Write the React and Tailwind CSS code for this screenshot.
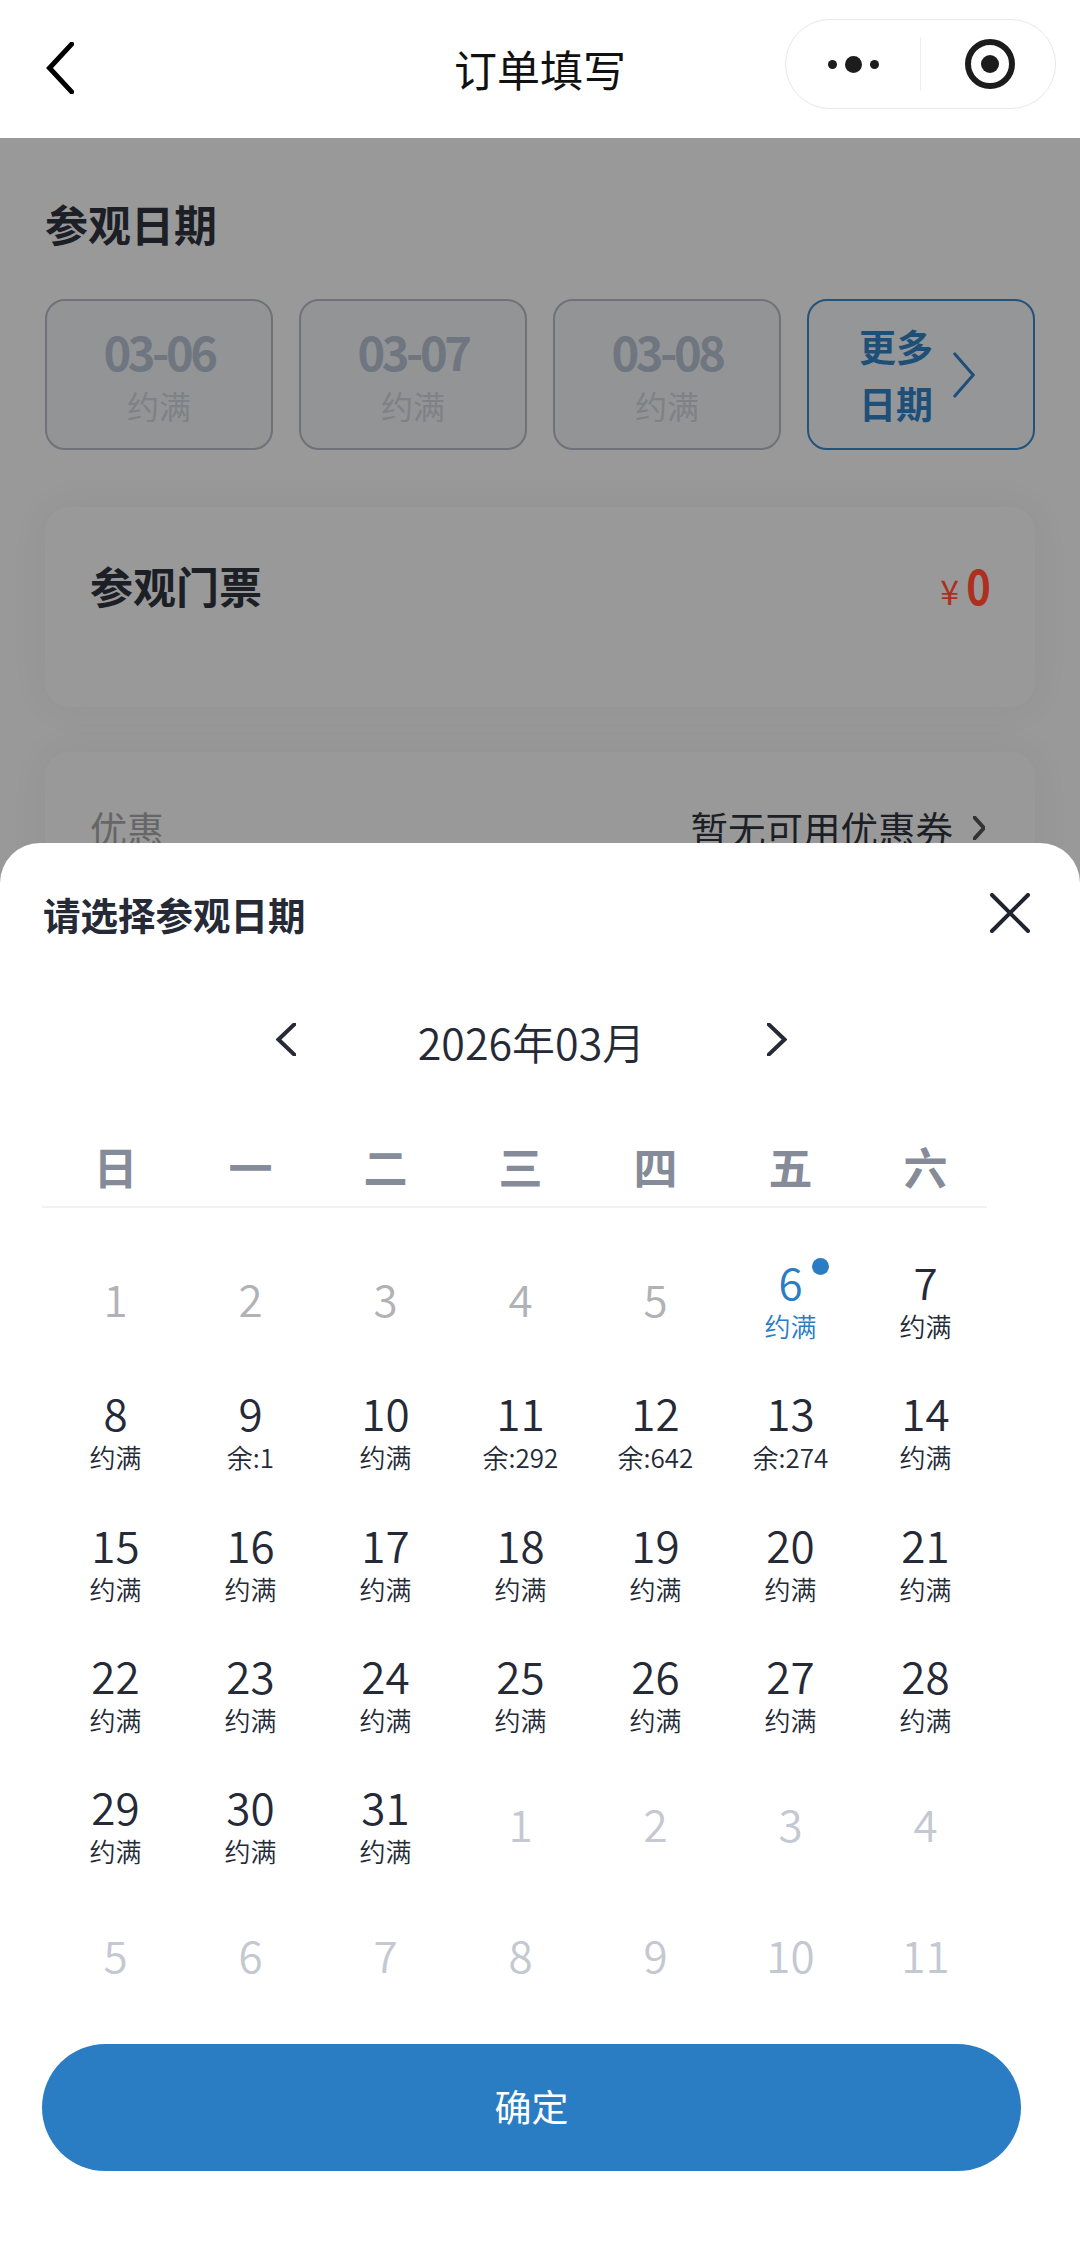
import React from 'react';

const weekdays = ['日', '一', '二', '三', '四', '五', '六'];

const full = '约满';

const days = [
  { n: 1, muted: true }, { n: 2, muted: true }, { n: 3, muted: true }, { n: 4, muted: true }, { n: 5, muted: true },
  { n: 6, sub: full, selected: true }, { n: 7, sub: full },
  { n: 8, sub: full }, { n: 9, sub: '余:1' }, { n: 10, sub: full }, { n: 11, sub: '余:292' }, { n: 12, sub: '余:642' }, { n: 13, sub: '余:274' }, { n: 14, sub: full },
  { n: 15, sub: full }, { n: 16, sub: full }, { n: 17, sub: full }, { n: 18, sub: full }, { n: 19, sub: full }, { n: 20, sub: full }, { n: 21, sub: full },
  { n: 22, sub: full }, { n: 23, sub: full }, { n: 24, sub: full }, { n: 25, sub: full }, { n: 26, sub: full }, { n: 27, sub: full }, { n: 28, sub: full },
  { n: 29, sub: full }, { n: 30, sub: full }, { n: 31, sub: full },
  { n: 1, next: true }, { n: 2, next: true }, { n: 3, next: true }, { n: 4, next: true },
  { n: 5, next: true }, { n: 6, next: true }, { n: 7, next: true }, { n: 8, next: true }, { n: 9, next: true }, { n: 10, next: true }, { n: 11, next: true },
];

function Chevron({ className, points, width = 3 }) {
  return (
    <svg className={className} viewBox="0 0 24 48" fill="none" stroke="currentColor" strokeWidth={width} strokeLinecap="round" strokeLinejoin="miter" preserveAspectRatio="none">
      <polyline points={points} vectorEffect="non-scaling-stroke" />
    </svg>
  );
}

function DateCard({ date }) {
  return (
    <div className="flex h-[151px] flex-col items-center rounded-[20px] border-2 border-[#6f7278] bg-[#939496] pt-[23px]">
      <span className="text-[47px] leading-[54px] font-semibold tracking-[-3.5px] text-[#6f7680]">{date}</span>
      <span className="mt-[4px] text-[32px] leading-[46px] text-[#7e8287]">约满</span>
    </div>
  );
}

function DayCell({ day }) {
  if (day.muted || day.next) {
    return (
      <div className={`flex h-[131.25px] items-center justify-center pb-[6px] text-[44px] font-[350] ${day.next ? 'text-[#c4c8d0]' : 'text-[#b1b2b5]'}`}>
        {day.n}
      </div>
    );
  }
  return (
    <div className={`relative flex h-[131.25px] flex-col items-center pt-[21px] font-[350] ${day.selected ? 'text-[#2a7dc3]' : 'text-[#252a36]'}`}>
      <span className="text-[44px] leading-[50px]">{day.n}</span>
      <span className="mt-[4px] text-[26px] leading-[32px]">{day.sub}</span>
      {day.selected && <span className="absolute top-[23px] left-[89px] h-[17px] w-[17px] rounded-full bg-[#2a7dc3]" />}
    </div>
  );
}

export default function App() {
  return (
    <div
      className="relative flex h-[2241px] w-[1080px] flex-col overflow-hidden bg-[#999999] text-[#1c1f26]"
      style={{ fontFamily: '"Noto Sans CJK SC", "Noto Sans", sans-serif' }}
    >
      <header className="relative flex h-[138px] shrink-0 items-center justify-center bg-white">
        <Chevron className="absolute top-[42px] left-[46px] h-[52px] w-[28px] text-black" points="22,2 3,24 22,46" width={5} />
        <h1 className="mt-[-1px] text-[43px] font-normal text-[#111]">订单填写</h1>
        <div className="absolute top-[19px] left-[785px] flex h-[90px] w-[271px] items-center rounded-full border border-[#e8e8e8] bg-white">
          <div className="flex w-[134px] items-center justify-center gap-[8px]">
            <span className="h-[9px] w-[9px] rounded-full bg-[#1c1c1c]" />
            <span className="h-[17px] w-[17px] rounded-full bg-[#1c1c1c]" />
            <span className="h-[9px] w-[9px] rounded-full bg-[#1c1c1c]" />
          </div>
          <div className="h-[54px] w-px bg-[#eeeeee]" />
          <div className="flex flex-1 items-center justify-center pl-[3px]">
            <div className="flex h-[50px] w-[50px] items-center justify-center rounded-full border-[6px] border-[#1c1c1c]">
              <span className="h-[18px] w-[18px] rounded-full bg-[#1c1c1c]" />
            </div>
          </div>
        </div>
      </header>

      <main className="px-[45px]">
        <h2 className="mt-[54px] text-[43px] leading-[62px] font-bold">参观日期</h2>
        <div className="mt-[45px] grid grid-cols-[228px_228px_228px_228px] gap-x-[26px]">
          <DateCard date="03-06" />
          <DateCard date="03-07" />
          <DateCard date="03-08" />
          <div className="flex h-[151px] items-center gap-[18px] rounded-[20px] border-2 border-[#23527a] bg-[#959697] pl-[50px] text-[#1e4f78]">
            <span className="w-[76px] text-[37px] leading-[57px] font-bold">更多 日期</span>
            <Chevron className="h-[46px] w-[22px]" points="2,2 22,24 2,46" />
          </div>
        </div>

        <section className="mt-[57px] flex h-[200px] items-start justify-between rounded-[24px] bg-[#999999] pt-[48px] pr-[44px] pl-[45px] shadow-[0_0_40px_rgba(0,0,0,0.05)]">
          <span className="text-[43px] leading-[60px] font-bold">参观门票</span>
          <span className="flex items-baseline gap-[3px] text-[#ad301f]">
            <span className="text-[34px]">¥</span>
            <span className="inline-block origin-right scale-x-[0.85] text-[49px] leading-[58px] font-semibold">0</span>
          </span>
        </section>

        <section className="mt-[45px] flex h-[200px] items-start justify-between rounded-[24px] bg-[#999999] pt-[50px] pr-[50px] pl-[45px] shadow-[0_0_40px_rgba(0,0,0,0.05)]">
          <span className="text-[37px] leading-[52px] text-[#666666]">优惠</span>
          <span className="flex items-center gap-[20px] text-[37.5px] leading-[52px]">
            暂无可用优惠券
            <Chevron className="h-[24px] w-[12px] text-[#333]" points="2,2 22,24 2,46" width={4} />
          </span>
        </section>
      </main>

      <div className="absolute inset-x-0 bottom-0 flex h-[1398px] flex-col rounded-t-[40px] bg-white pl-[42px] text-[#252a36]">
        <div className="relative flex h-[144px] shrink-0 items-start pt-[44px]">
          <h3 className="ml-[1px] text-[37.5px] leading-[54px] font-semibold">请选择参观日期</h3>
          <svg className="absolute top-[50px] left-[948px] h-[40px] w-[40px]" viewBox="0 0 40 40" fill="none" stroke="#1f2430" strokeWidth="4" strokeLinecap="round">
            <path d="M2 2L38 38M38 2L2 38" />
          </svg>
        </div>

        <div className="flex h-[110px] w-[979px] shrink-0 items-center justify-center pb-[6px]">
          <Chevron className="h-[33px] w-[20px]" points="22,2 3,24 22,46" width={4} />
          <span className="mx-[122px] mt-[4px] text-[43px] leading-[60px] font-[350]">2026年03月</span>
          <Chevron className="h-[33px] w-[20px]" points="2,2 21,24 2,46" width={4} />
        </div>

        <div className="mt-[30px] grid h-[81px] w-[945px] shrink-0 grid-cols-[repeat(7,135px)] border-b-2 border-[#f1f2f5] pt-[9px] pl-[6px]">
          {weekdays.map((w) => (
            <div key={w} className="text-center text-[44px] leading-[60px] font-bold text-[#858b99]">{w}</div>
          ))}
        </div>

        <div className="mt-[27px] grid w-[945px] shrink-0 grid-cols-[repeat(7,135px)] pl-[6px]">
          {days.map((day, i) => (
            <DayCell key={i} day={day} />
          ))}
        </div>

        <button className="mt-[21px] flex h-[127px] w-[979px] shrink-0 items-center justify-center rounded-full bg-[#2a7dc3] text-[37px] text-white">
          确定
        </button>
      </div>
    </div>
  );
}
